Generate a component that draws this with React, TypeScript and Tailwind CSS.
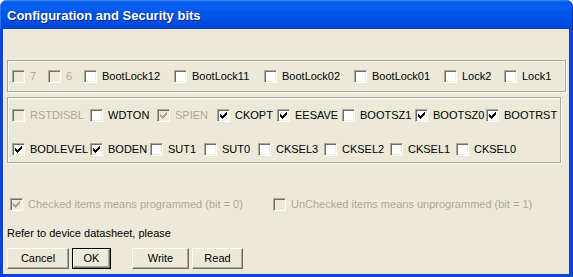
import React from "react";

const CHECK_COLS = [2, 3, 4, 3, 2, 1, 0];

function Box({ checked = false, disabled = false }: { checked?: boolean; disabled?: boolean }) {
  return (
    <span
      className={
        disabled
          ? "relative block w-[13px] h-[13px] shrink-0 border border-t-[#ACA899] border-l-[#ACA899] border-r-white border-b-white bg-[#ECE9D8] shadow-[inset_1px_1px_0_#716F64,inset_-1px_-1px_0_#F1EFE2]"
          : "relative block w-[13px] h-[13px] shrink-0 border border-t-[#ACA899] border-l-[#ACA899] border-r-white border-b-white bg-white shadow-[inset_1px_1px_0_#716F64,inset_-1px_-1px_0_#F1EFE2]"
      }
    >
      {checked && (
        <svg
          className="absolute left-[2px] top-[2px]"
          width="7"
          height="7"
          viewBox="0 0 7 7"
          shapeRendering="crispEdges"
        >
          {CHECK_COLS.map((y, i) => (
            <rect key={i} x={i} y={y} width="1" height="3" fill={disabled ? "#ACA899" : "#000000"} />
          ))}
        </svg>
      )}
    </span>
  );
}

type Item = { label: string; w: number; checked?: boolean; disabled?: boolean };

function CheckItem({ item }: { item: Item }) {
  return (
    <div className="flex items-center shrink-0" style={{ width: item.w }}>
      <Box checked={item.checked} disabled={item.disabled} />
      <span
        className={
          item.disabled
            ? "ml-[5px] text-[11px] leading-[13px] text-[#ACA899] whitespace-nowrap"
            : "ml-[5px] text-[11px] leading-[13px] text-black whitespace-nowrap"
        }
      >
        {item.label}
      </span>
    </div>
  );
}

const row1: Item[] = [
  { label: "7", w: 36, disabled: true },
  { label: "6", w: 36, disabled: true },
  { label: "BootLock12", w: 90 },
  { label: "BootLock11", w: 90 },
  { label: "BootLock02", w: 90 },
  { label: "BootLock01", w: 90 },
  { label: "Lock2", w: 60 },
  { label: "Lock1", w: 50 },
];

const row2: Item[] = [
  { label: "RSTDISBL", w: 78, disabled: true },
  { label: "WDTON", w: 67 },
  { label: "SPIEN", w: 60, checked: true, disabled: true },
  { label: "CKOPT", w: 60, checked: true },
  { label: "EESAVE", w: 65, checked: true },
  { label: "BOOTSZ1", w: 73 },
  { label: "BOOTSZ0", w: 71, checked: true },
  { label: "BOOTRST", w: 66, checked: true },
];

const row3: Item[] = [
  { label: "BODLEVEL", w: 78, checked: true },
  { label: "BODEN", w: 60, checked: true },
  { label: "SUT1", w: 54 },
  { label: "SUT0", w: 54 },
  { label: "CKSEL3", w: 66 },
  { label: "CKSEL2", w: 66 },
  { label: "CKSEL1", w: 66 },
  { label: "CKSEL0", w: 60 },
];

function Btn({ label, w, def = false }: { label: string; w: number; def?: boolean }) {
  if (def) {
    return (
      <div className="h-[21px] border border-black" style={{ width: w }}>
        <div className="h-full w-full flex items-center justify-center border border-t-white border-l-white border-r-[#716F64] border-b-[#716F64] shadow-[inset_-1px_-1px_0_#ACA899] bg-[#ECE9D8] text-[11px] text-black">
          {label}
        </div>
      </div>
    );
  }
  return (
    <div
      className="h-[21px] flex items-center justify-center border border-t-white border-l-white border-r-[#716F64] border-b-[#716F64] shadow-[inset_-1px_-1px_0_#ACA899] bg-[#ECE9D8] text-[11px] text-black"
      style={{ width: w }}
    >
      {label}
    </div>
  );
}

export default function App() {
  return (
    <div className="w-[573px] h-[277px] flex flex-col bg-white font-['Liberation_Sans',Arial,sans-serif] overflow-hidden">
      {/* Title bar */}
      <div className="h-[29px] shrink-0 rounded-t-[7px] flex items-center pl-[7px] pt-[1px] bg-[linear-gradient(to_bottom,#3D8BF5_0px,#0A5CEC_2px,#0058EE_4px,#0A61F2_7px,#0056EA_12px,#0050E6_20px,#0047D8_26px,#0041CC_29px)] shadow-[inset_1px_0_0_#2F6FE8,inset_-1px_0_0_#0030B0]">
        <span className="text-white font-bold text-[13px] leading-none [text-shadow:1px_1px_0_#0A2A8A]">
          Configuration and Security bits
        </span>
      </div>
      {/* Body */}
      <div className="flex-1 flex flex-col bg-[#ECE9D8] border-l-[3px] border-r-[4px] border-b-[3px] border-l-[#0845D8] border-r-[#0845D8] border-b-[#0845D8] pt-[31px] pl-[4px]">
        {/* Group 1 */}
        <div className="w-[559px] h-[32px] border border-[#ACA899] shadow-[inset_1px_1px_0_#ffffff,1px_1px_0_#ffffff] flex items-center pl-[4px] pt-[1px]">
          {row1.map((it) => (
            <CheckItem key={it.label} item={it} />
          ))}
        </div>
        {/* Group 2 */}
        <div className="mt-[5px] w-[554px] h-[66px] border border-[#ACA899] shadow-[inset_1px_1px_0_#ffffff,1px_1px_0_#ffffff] flex flex-col pl-[4px] pt-[11px] gap-[21px]">
          <div className="flex h-[13px] items-center">
            {row2.map((it) => (
              <CheckItem key={it.label} item={it} />
            ))}
          </div>
          <div className="flex h-[13px] items-center">
            {row3.map((it) => (
              <CheckItem key={it.label} item={it} />
            ))}
          </div>
        </div>
        {/* Legend row */}
        <div className="mt-[35px] ml-[3px] flex h-[13px] items-center">
          <div className="flex items-center w-[263px]">
            <Box checked disabled />
            <span className="ml-[5px] text-[11px] leading-[13px] text-[#ACA899] whitespace-nowrap">
              Checked items means programmed (bit = 0)
            </span>
          </div>
          <div className="flex items-center">
            <Box disabled />
            <span className="ml-[5px] text-[11px] leading-[13px] text-[#ACA899] whitespace-nowrap">
              UnChecked items means unprogrammed (bit = 1)
            </span>
          </div>
        </div>
        {/* Note */}
        <div className="mt-[16px] text-[11px] leading-[13px] text-black">Refer to device datasheet, please</div>
        {/* Buttons */}
        <div className="mt-[8px] flex items-center">
          <Btn label="Cancel" w={62} />
          <div className="ml-[3px]">
            <Btn label="OK" w={39} def />
          </div>
          <div className="ml-[21px]">
            <Btn label="Write" w={57} />
          </div>
          <div className="ml-[3px]">
            <Btn label="Read" w={51} />
          </div>
        </div>
      </div>
    </div>
  );
}
